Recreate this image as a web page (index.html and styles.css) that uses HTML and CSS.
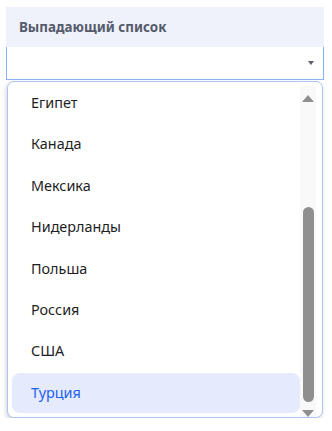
FILE: index.html
```html
<!DOCTYPE html>
<html lang="ru">
<head>
<meta charset="utf-8">
<link rel="stylesheet" href="styles.css">
</head>
<body>
<div class="wrap">
  <div class="label">Выпадающий список</div>
  <div class="input"><span class="caret"></span></div>
  <div class="dropdown">
    <ul class="list">
      <li class="item">Египет</li>
      <li class="item">Канада</li>
      <li class="item">Мексика</li>
      <li class="item">Нидерланды</li>
      <li class="item">Польша</li>
      <li class="item">Россия</li>
      <li class="item">США</li>
      <li class="item selected">Турция</li>
    </ul>
    <div class="scrollbar">
      <span class="arrow-up"></span>
      <span class="spacer"></span>
      <span class="thumb"></span>
      <span class="arrow-down"></span>
    </div>
  </div>
</div>
</body>
</html>
```
FILE: styles.css
```css
* { box-sizing: border-box; }
html, body { margin: 0; padding: 0; background: #fff; }
body { font-family: "Noto Sans", sans-serif; }
.wrap { padding: 7px 8px 0 6px; }
.label {
  height: 40px;
  background: #eff2fa;
  padding-left: 13px;
  font-size: 13.4px;
  font-weight: 700;
  line-height: 41px;
  color: #555b6a;
}
.input {
  height: 33px;
  border: 1px solid #8cb1f4;
  border-top: none;
  display: flex;
  align-items: center;
  justify-content: flex-end;
  padding-right: 9px;
}
.caret {
  width: 0; height: 0;
  border-left: 3.5px solid transparent;
  border-right: 3.5px solid transparent;
  border-top: 4.5px solid #5b5f69;
}
.dropdown {
  margin: 1px 1px 0 1px;
  height: 337px;
  border: 1px solid #aec3f6;
  border-radius: 7px;
  box-shadow: -1px 2px 4px rgba(0,0,0,0.18);
  display: flex;
  overflow: hidden;
  background: #fff;
}
.list {
  list-style: none;
  margin: 0;
  padding: 1px 0 0 4px;
  flex: 1;
  display: flex;
  flex-direction: column;
  gap: 1.4px;
}
.item {
  height: 40px;
  line-height: 40px;
  padding-left: 19px;
  font-size: 14.4px;
  color: #1e1e1e;
  border-radius: 8px;
}
.item.selected {
  background: #e5ebfd;
  color: #1f60f2;
}
.scrollbar {
  width: 16px;
  margin: 4px 6px 0 0;
  background: #f9f9f9;
  display: flex;
  flex-direction: column;
  align-items: center;
  padding-top: 9px;
}
.arrow-up {
  width: 0; height: 0;
  border-left: 6px solid transparent;
  border-right: 6px solid transparent;
  border-bottom: 7px solid #8f8f8f;
}
.spacer { flex: 1; }
.thumb {
  width: 11px;
  height: 195px;
  border-radius: 6px;
  background: #8f8f8f;
}
.arrow-down {
  margin-top: 8px;
  margin-bottom: 0.5px;
  width: 0; height: 0;
  border-left: 6px solid transparent;
  border-right: 6px solid transparent;
  border-top: 7px solid #8f8f8f;
}
```
